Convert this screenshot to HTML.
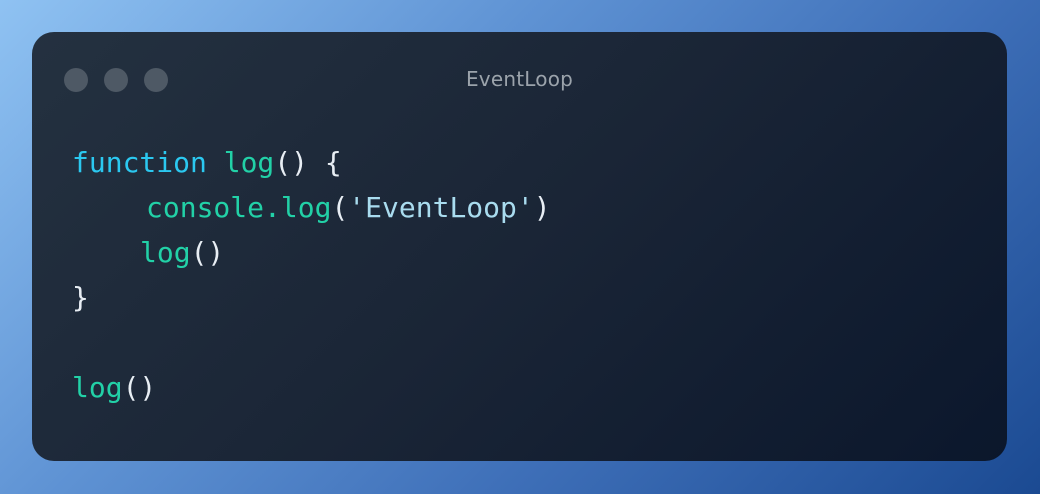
<!DOCTYPE html>
<html><head><meta charset="utf-8"><style>
html,body{margin:0;padding:0;width:1040px;height:494px;overflow:hidden}
body{background:linear-gradient(135deg,#8fc2f2 0%,#5f93d4 35%,#3e6fb8 65%,#1b4a92 100%);position:relative}
.card{position:absolute;left:32px;top:32px;width:975px;height:429px;border-radius:22px;background:linear-gradient(135deg,#243140 0%,#1a2536 50%,#0b172c 100%)}
.dot{position:absolute;top:36px;width:24px;height:24px;border-radius:50%;background:#4e5965}
.title{position:absolute;left:0;right:0;top:35px;text-align:center;color:#9ba3ab;font:20px "DejaVu Sans","Liberation Sans",sans-serif;letter-spacing:0.2px}
.code{position:absolute;left:40px;top:108px;font:28px/45px "DejaVu Sans Mono","Liberation Mono",monospace;white-space:pre;color:#e6edf3}
.k{color:#2bc8f0}.f{color:#22d1a7}.s{color:#a9dcef}.p{color:#e8eef4}
</style></head><body>
<div class="card">
<div class="dot" style="left:32px"></div>
<div class="dot" style="left:72px"></div>
<div class="dot" style="left:112px"></div>
<div class="title">EventLoop</div>
<div class="code"><span class="k">function</span> <span class="f">log</span><span class="p">() {</span>
<span style="padding-left:74px"></span><span class="f">console.log</span><span class="p">(</span><span class="s">'EventLoop'</span><span class="p">)</span>
<span style="padding-left:68px"></span><span class="f">log</span><span class="p">()</span>
<span class="p">}</span>

<span class="f">log</span><span class="p">()</span></div>
</div>
</body></html>
